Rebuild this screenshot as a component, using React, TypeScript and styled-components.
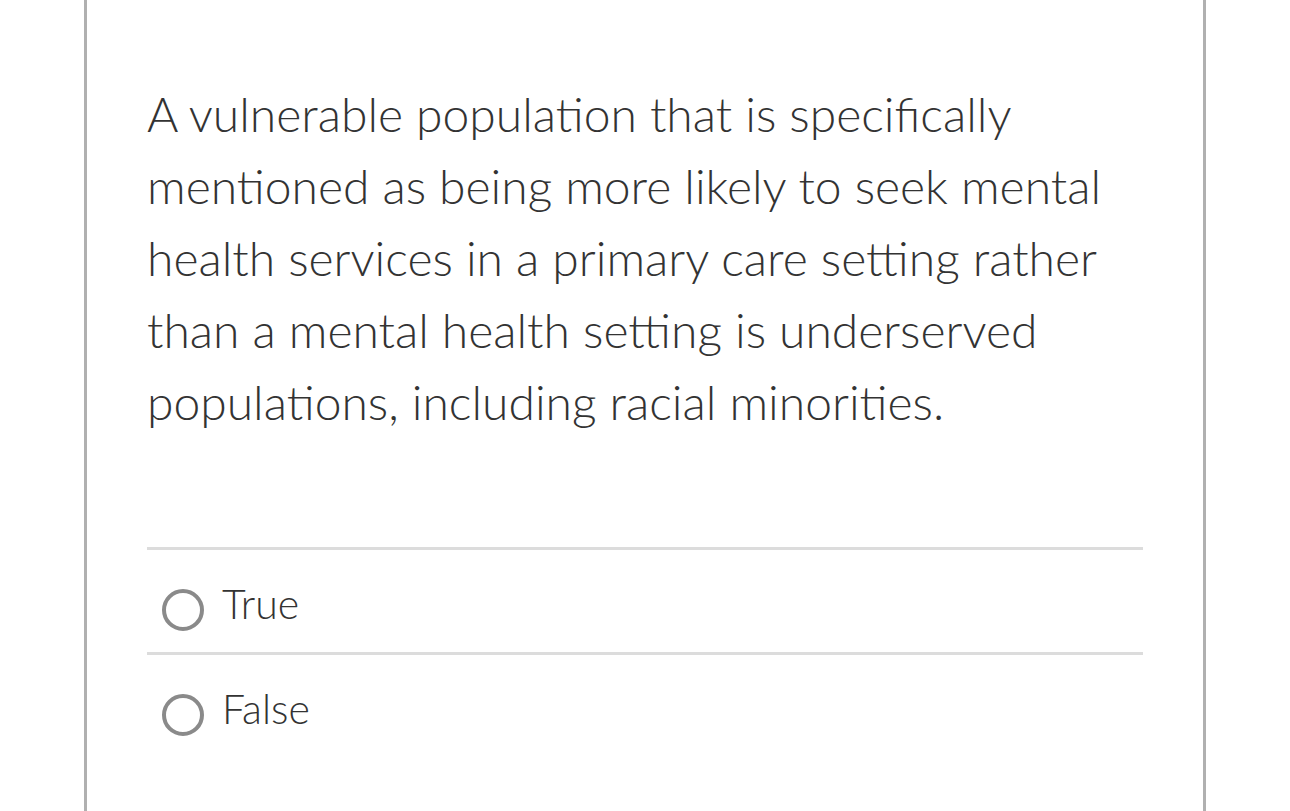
import React from 'react'
import styled, { createGlobalStyle } from 'styled-components'

const GlobalStyle = createGlobalStyle`
  html, body {
    margin: 0;
    padding: 0;
    background: #ffffff;
  }
  body {
    font-family: Lato, "Liberation Sans", sans-serif;
    overflow: hidden;
  }
`

const Card = styled.div`
  margin-left: 84px;
  width: 1122px;
  height: 811px;
  border-left: 3px solid #b0b0b0;
  border-right: 3px solid #b0b0b0;
  padding: 78px 60px 0;
  box-sizing: border-box;
`

const Question = styled.p`
  margin: 0 0 109px;
  font-size: 48px;
  font-weight: 300;
  line-height: 72px;
  color: #333333;
  font-feature-settings: "liga" 1, "dlig" 1;
`

const Answers = styled.div`
  display: flex;
  flex-direction: column;
`

const Option = styled.label`
  display: flex;
  align-items: flex-start;
  gap: 18px;
  height: 105px;
  padding: 39px 0 0 15px;
  box-sizing: border-box;
  border-top: 3px solid #dcdcdc;
  cursor: pointer;
`

const Radio = styled.span`
  flex: none;
  width: 42px;
  height: 42px;
  border: 4px solid #8a8a8a;
  border-radius: 50%;
  box-sizing: border-box;
  background: #fff;
`

const OptionText = styled.span`
  font-size: 41px;
  font-weight: 300;
  line-height: 41px;
  color: #333333;
  margin-top: -6px;
`

const options = ['True', 'False']

const App = () => {
  return (
    <>
      <GlobalStyle />
      <Card>
        <Question>
          A vulnerable population that is specifically mentioned as being more likely to seek mental
          health services in a primary care setting rather than a mental health setting is underserved
          populations, including racial minorities.
        </Question>
        <Answers>
          {options.map((opt) => (
            <Option key={opt}>
              <Radio />
              <OptionText>{opt}</OptionText>
            </Option>
          ))}
        </Answers>
      </Card>
    </>
  )
}

export default App
